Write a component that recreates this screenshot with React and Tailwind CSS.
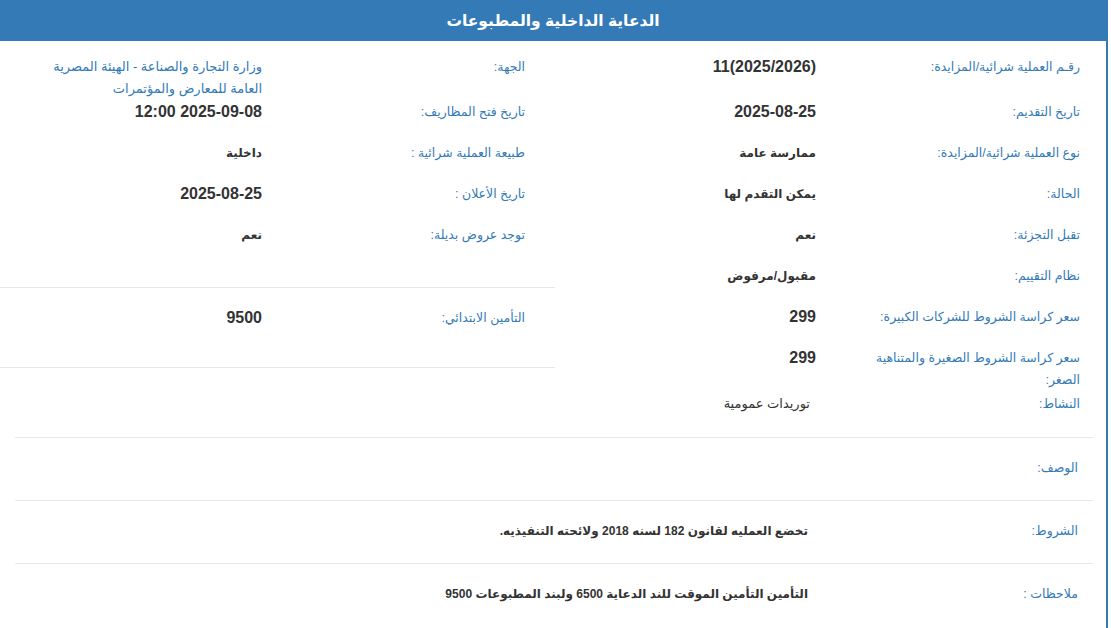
import React from "react";

const rightRows = [
  { label: "رقـم العملية شرائية/المزايدة:", value: "11(2025/2026)", num: true, h: "h-[45px]" },
  { label: "تاريخ التقديم:", value: "2025-08-25", num: true, h: "h-[41px]" },
  { label: "نوع العملية شرائية/المزايدة:", value: "ممارسة عامة", h: "h-[41px]" },
  { label: "الحالة:", value: "يمكن التقدم لها", h: "h-[41px]" },
  { label: "تقبل التجزئة:", value: "نعم", h: "h-[41px]" },
  { label: "نظام التقييم:", value: "مقبول/مرفوض", h: "h-[41px]" },
  { label: "سعر كراسة الشروط للشركات الكبيرة:", value: "299", num: true, h: "h-[41px]" },
  { label: "سعر كراسة الشروط الصغيرة والمتناهية الصغر:", value: "299", num: true, h: "h-[46px]" },
  { label: "النشاط:", value: "توريدات عمومية", light: true, h: "h-[59px]" },
];

const leftRows = [
  { label: "الجهة:", value: "وزارة التجارة والصناعة - الهيئة المصرية العامة للمعارض والمؤتمرات", blue: true, h: "h-[45px]" },
  { label: "تاريخ فتح المظاريف:", value: "12:00 2025-09-08", num: true, h: "h-[41px]" },
  { label: "طبيعة العملية شرائية :", value: "داخلية", h: "h-[41px]" },
  { label: "تاريخ الأعلان :", value: "2025-08-25", num: true, h: "h-[41px]" },
  { label: "توجد عروض بديلة:", value: "نعم", h: "h-[41px]" },
];

const fullRows = [
  { label: "الوصف:", value: "" },
  { label: "الشروط:", value: "تخضع العمليه لقانون 182 لسنه 2018 ولائحته التنفيذيه." },
  { label: "ملاحظات :", value: "التأمين التأمين الموقت للند الدعاية 6500 ولبند المطبوعات 9500" },
];

function Value({ row }) {
  if (row.blue) {
    return <div className="w-[225px] text-[13px] leading-[22px] text-[#337ab7]">{row.value}</div>;
  }
  if (row.num) {
    return (
      <div className="text-right text-[16px] leading-[22px] font-bold text-[#333]">
        <span dir="ltr">{row.value}</span>
      </div>
    );
  }
  if (row.light) {
    return <div className="pr-[6px] text-[13px] leading-[22px] text-[#333]">{row.value}</div>;
  }
  return <div className="text-[12px] leading-[22px] font-bold text-[#333]">{row.value}</div>;
}

function Row({ row, labelW }) {
  return (
    <div className={`flex items-start pt-[15px] ${row.h}`}>
      <div className={`${labelW} shrink-0 text-[12.5px] leading-[22px] text-[#337ab7]`}>
        <div className="max-w-[215px]">{row.label}</div>
      </div>
      <div className="flex-1">
        <Value row={row} />
      </div>
    </div>
  );
}

export default function App() {
  return (
    <div
      dir="rtl"
      className="mr-[3px] min-h-[628px] border-r-2 border-[#337ab7] bg-white"
      style={{ fontFamily: '"Liberation Sans", "DejaVu Sans", Arial, sans-serif' }}
    >
      <div className="flex h-[41px] items-center justify-center bg-[#337ab7] text-[15.5px] font-bold text-white">
        الدعاية الداخلية والمطبوعات
      </div>

      <div className="flex items-start">
        <div className="w-[551px] shrink-0 pr-[26px]">
          {rightRows.map((r) => (
            <Row key={r.label} row={r} labelW="w-[264px]" />
          ))}
        </div>
        <div className="flex-1">
          <div className="pr-[30px]">
            {leftRows.map((r) => (
              <Row key={r.label} row={r} labelW="w-[263px]" />
            ))}
          </div>
          <div className="mt-[37px] flex h-[81px] items-start border-y border-[#e8e8e8] pt-[19px] pr-[30px]">
            <div className="w-[263px] shrink-0 text-[12.5px] leading-[22px] text-[#337ab7]">التأمين الابتدائي:</div>
            <div className="text-[16px] leading-[22px] font-bold text-[#333]">9500</div>
          </div>
        </div>
      </div>

      <div className="mr-[13px] ml-[15px]">
        {fullRows.map((r) => (
          <div key={r.label} className="flex h-[63px] items-start border-t border-[#e8e8e8] pt-[19px] pr-[15px]">
            <div className="w-[270px] shrink-0 text-[12.5px] leading-[22px] text-[#337ab7]">{r.label}</div>
            <div className="text-[12px] leading-[22px] font-bold text-[#333]">{r.value}</div>
          </div>
        ))}
      </div>
    </div>
  );
}
